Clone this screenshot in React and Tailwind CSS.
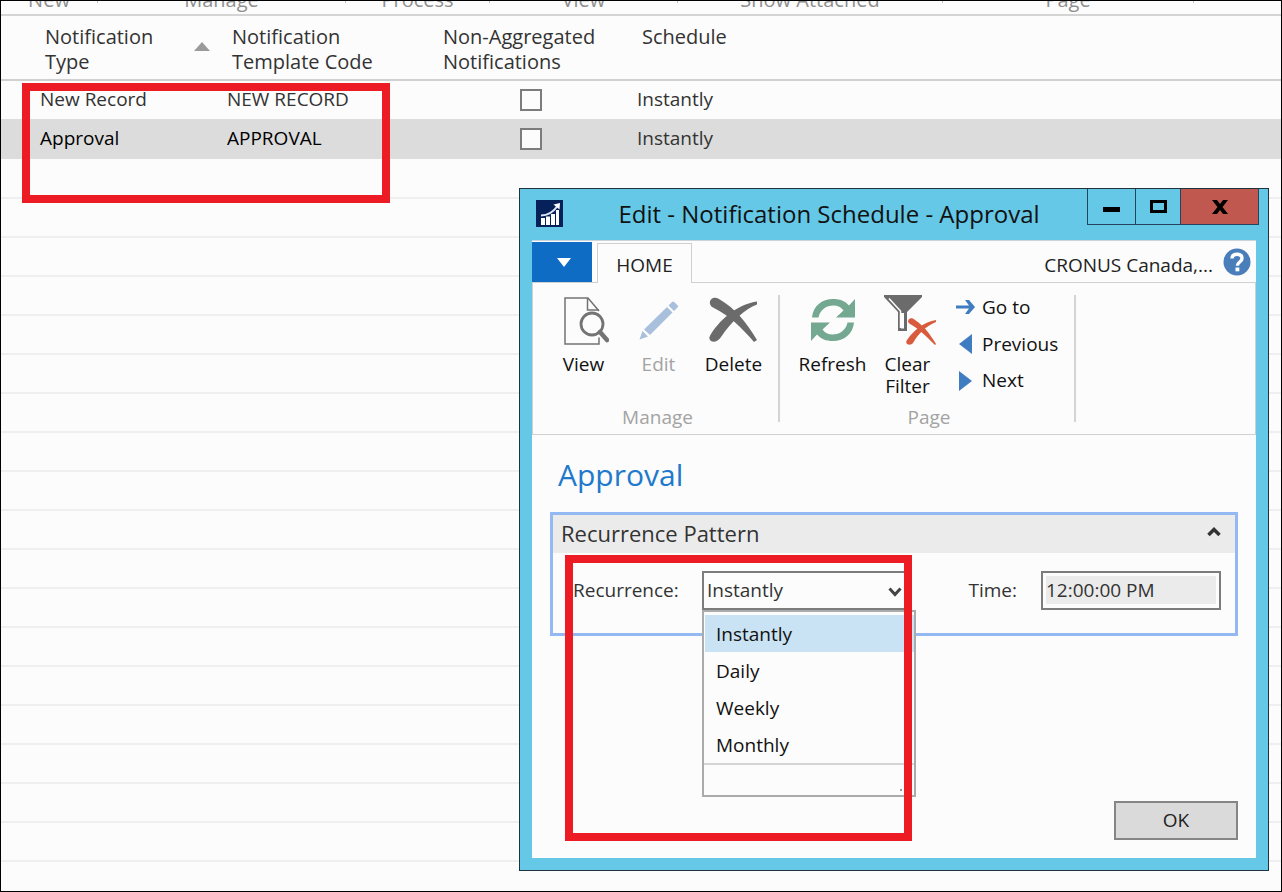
import { useState } from "react";

const ribbonGroups = [
  { label: "New", width: "w-[97px]" },
  { label: "Manage", width: "w-[248px]" },
  { label: "Process", width: "w-36" },
  { label: "View", width: "w-[188px]" },
  { label: "Show Attached", width: "w-[265px]" },
  { label: "Page", width: "w-[251px]" },
];

const records = [
  { type: "New Record", code: "NEW RECORD", schedule: "Instantly", selected: false },
  { type: "Approval", code: "APPROVAL", schedule: "Instantly", selected: true },
];

const emptyRows = Array.from({ length: 19 }, (_, i) => i);

const recurrenceOptions = ["Instantly", "Daily", "Weekly", "Monthly"];

function TopRibbon() {
  return (
    <div className="flex h-[15px] overflow-hidden border-b-2 border-[#d4d4d4]">
      {ribbonGroups.map((g) => (
        <div key={g.label} className={`flex shrink-0 items-end ${g.width}`}>
          <span className="flex-1 pb-1 text-center text-[20px] leading-5 text-[#8f8f8f]">{g.label}</span>
          <span className="h-0.5 w-px self-start bg-[#c8c8c8]" />
        </div>
      ))}
    </div>
  );
}

function NotificationTable() {
  return (
    <table className="w-full table-fixed border-collapse text-left text-[19px] text-[#333]">
      <colgroup>
        <col className="w-[187px]" />
        <col className="w-[211px]" />
        <col className="w-[199px]" />
        <col />
      </colgroup>
      <thead>
        <tr className="h-16 border-b-2 border-[#d0d0d0] align-top text-[20px] leading-[25px]">
          <th className="pt-2 pl-11 font-normal">Notification<br />Type</th>
          <th className="relative pt-2 pl-11 font-normal">
            <svg className="absolute top-[26px] left-1.5" width="16" height="9" viewBox="0 0 16 9" aria-hidden="true">
              <path d="M8 0 16 9H0z" fill="#9a9a9a" />
            </svg>
            Notification<br />Template Code
          </th>
          <th className="pt-2 pl-11 font-normal whitespace-nowrap">Non-Aggregated<br />Notifications</th>
          <th className="pt-2 pl-11 font-normal">Schedule</th>
        </tr>
      </thead>
      <tbody>
        {records.map((r) => (
          <tr key={r.type} className={r.selected ? "h-10 bg-[#dcdcdc]" : "h-[39px]"}>
            <td className={r.selected ? "pb-px pl-[39px] text-black" : "pb-px pl-[39px]"}>{r.type}</td>
            <td className={r.selected ? "pb-px pl-[39px] text-black" : "pb-px pl-[39px]"}>{r.code}</td>
            <td className="pl-[121px]">
              <input
                type="checkbox"
                aria-label={`Non-aggregated notifications for ${r.type}`}
                className="block size-[22px] appearance-none border-2 border-[#7c7c7c] bg-[#fcfcfc] checked:bg-[#4a7ebb]"
              />
            </td>
            <td className="pb-px pl-[39px]">{r.schedule}</td>
          </tr>
        ))}
        {emptyRows.map((i) => (
          <tr key={i} className="h-[39px] border-b-2 border-[#efefef]">
            <td colSpan={4} />
          </tr>
        ))}
      </tbody>
    </table>
  );
}

function AppLogo() {
  return (
    <svg width="27" height="27" viewBox="0 0 27 27" aria-hidden="true">
      <rect width="27" height="27" fill="#06215a" />
      <path d="M5 18h4v7H5zM10 16.500h4V25h-4zM15 14h4v11h-4zM20 10h3v15h-3z" fill="#fff" />
      <path d="M5 15.500c7 0 12-3 16.500-9.500" fill="none" stroke="#dfe6f2" strokeWidth="2" />
      <path d="M17.500 4.500 24 3l-.5 6.500z" fill="#fff" />
    </svg>
  );
}

function ViewIcon() {
  return (
    <svg width="50" height="50" viewBox="0 0 50 50" fill="none" stroke="#737373" aria-hidden="true">
      <path d="M40 42.500V49H6V3h23l11 13" strokeWidth="1.500" />
      <path d="M28.500 3v12H40" strokeWidth="1.500" />
      <circle cx="33" cy="29" r="11" strokeWidth="2.800" />
      <path d="m41 37 7 8" strokeWidth="4.500" strokeLinecap="round" />
    </svg>
  );
}

function EditIcon() {
  return (
    <svg width="50" height="50" viewBox="0 0 50 50" fill="#a9c0dd" aria-hidden="true">
      <path d="M10 34.500 33 12l5.500 5.500L16 40z" />
      <path d="M34.500 10.500 38 7c.7-.7 1.500-.7 2.200 0l3.500 3.500c.6.6.6 1.200 0 1.800L40 16z" />
      <path d="M8.500 36 14 41.500 5.500 44.500z" />
    </svg>
  );
}

function DeleteIcon() {
  return (
    <svg width="50" height="50" viewBox="0 0 50 50" fill="#6b6b6b" aria-hidden="true">
      <path d="M1 9C0 4 5 1 10 4c16 9 28 24 38 41l-3 2C33 33 21 21 5 13c-2-1-3.500-2-4-4z" />
      <path d="M2 39C13 22 30 9 48 6.500V9.500C36 14 22 27 12 42c-3 5-9 6-11 3-1-1.500-1-3 1-6z" />
    </svg>
  );
}

function RefreshIcon() {
  return (
    <svg width="46" height="46" viewBox="0 0 46 46" fill="#74a891" aria-hidden="true">
      <path d="M2 20.500C3 9 12 2 23 2c7 0 12 2 16 6.500L45 2v18.500H26l7.500-7C31 10 28 8.500 23.500 8.500 16 8.500 10 13 8.500 20.500z" />
      <path d="M44 25.500C43 37 34 44 23 44c-7 0-12-2-16-6.500L1 44V25.500h19l-7.500 7C15 36 18 37.500 22.500 37.500 30 37.500 36 33 37.500 25.500z" />
    </svg>
  );
}

function ClearFilterIcon() {
  return (
    <svg width="58" height="52" viewBox="0 0 58 52" aria-hidden="true">
      <path d="M5 1h38v2L28 18v19h-9V18L5 3z" fill="#6b6b6b" />
      <path d="M10 4.500 21.500 17v17" fill="none" stroke="#fff" strokeWidth="1.500" />
      <path d="M23.500 19v15.500" fill="none" stroke="#fff" strokeWidth="3" />
      <path d="M29 28c0-4 4-5 7-2 9 6 15 14 21 24l-1 1C47 42 39 34 31 30z" fill="#d95b3d" />
      <path d="M28 46c7-10 17-18 29-20v2C47 32 39 40 34 49c-2 3-9 2-6-3z" fill="#d95b3d" />
    </svg>
  );
}

function HelpIcon() {
  return (
    <svg width="28" height="28" viewBox="0 0 28 28" aria-hidden="true">
      <circle cx="14" cy="14" r="13.500" fill="#4a7ebb" />
      <path d="M9 10.500C9 7.500 11.300 6.200 14 6.200s5 1.300 5 4.200c0 3.600-4.600 3.600-4.600 7.300" fill="none" stroke="#fff" strokeWidth="3.400" />
      <rect x="12.500" y="19.500" width="3.800" height="3.800" fill="#fff" />
    </svg>
  );
}

function TitleBar() {
  return (
    <header className="flex h-[51px] items-start pr-[9px] pl-4">
      <div className="mt-[11px]"><AppLogo /></div>
      <h1 className="flex-1 pt-[9px] pl-2 text-center text-[24px] leading-8 whitespace-nowrap text-[#111]">
        Edit - Notification Schedule - Approval
      </h1>
      <div className="flex h-9 border-x border-b border-[#24445c]">
        <button aria-label="Minimize" className="flex w-12 items-center justify-center border-r border-[#24445c]">
          <span className="mt-1.5 h-[5px] w-[17px] bg-black" />
        </button>
        <button aria-label="Maximize" className="flex w-11 items-center justify-center">
          <span className="h-[13px] w-[17px] border-[3px] border-black" />
        </button>
        <button aria-label="Close" className="flex w-[78px] items-center justify-center border-l border-[#24445c] bg-[#c1584f]">
          <svg width="16" height="14" viewBox="0 0 16 14" aria-hidden="true">
            <path d="M0 0h5l3 4 3-4h5l-5.500 7L16 14h-5l-3-4-3 4H0l5.500-7z" fill="#000" />
          </svg>
        </button>
      </div>
    </header>
  );
}

function TabRow() {
  return (
    <div className="flex h-[43px] items-stretch border-t border-[#c9d5da] bg-[#fcfcfc]">
      <div className="w-[65px] border-b border-[#d0d0d0] pt-px">
        <button aria-label="Application menu" className="flex h-10 w-[60px] items-center justify-center bg-[#0f6cc5] pl-1">
          <svg width="14" height="9" viewBox="0 0 14 9" aria-hidden="true">
            <path d="M0 0h14L7 9z" fill="#fff" />
          </svg>
        </button>
      </div>
      <button className="mt-0.5 w-[95px] border-x border-t border-[#d0d0d0] pt-1 text-[19px] text-[#222]">HOME</button>
      <div className="flex flex-1 items-center justify-end gap-2.5 border-b border-[#d0d0d0] pr-[5px]">
        <span className="pt-2 text-[19px] text-[#222]">CRONUS Canada,...</span>
        <button aria-label="Help"><HelpIcon /></button>
      </div>
    </div>
  );
}

function RibbonButton({ icon, label, width, disabled }) {
  return (
    <button disabled={disabled} className={`flex flex-col items-center text-[19px] leading-[22px] ${width} ${disabled ? "text-[#a3a3a3]" : "text-[#111]"}`}>
      <span className="mb-2 flex h-[50px] items-center">{icon}</span>
      {label}
    </button>
  );
}

function LinkButton({ icon, label }) {
  return (
    <button className="flex h-[37px] items-center gap-1.5 text-[19px] text-[#111]">
      <svg width="20" height="20" viewBox="0 0 20 20" aria-hidden="true">{icon}</svg>
      {label}
    </button>
  );
}

function Ribbon() {
  return (
    <div className="flex h-[152px] border-x border-b border-[#d0d0d0] pt-3">
      <section className="flex h-[127px] w-[247px] flex-col justify-between border-r-2 border-[#d4d4d4]">
        <div className="flex pl-[13px]">
          <RibbonButton icon={<ViewIcon />} label="View" width="w-[75px]" />
          <RibbonButton icon={<EditIcon />} label="Edit" width="w-[75px]" disabled />
          <RibbonButton icon={<DeleteIcon />} label="Delete" width="w-[75px]" />
        </div>
        <p className="pl-1 text-center text-[19px] leading-[10px] text-[#a3a3a3]">Manage</p>
      </section>
      <section className="flex h-[127px] w-[296px] flex-col justify-between border-r-2 border-[#d4d4d4]">
        <div className="flex h-[104px] pl-3.5">
          <RibbonButton icon={<RefreshIcon />} label="Refresh" width="w-[77px]" />
          <RibbonButton icon={<ClearFilterIcon />} label={<span>Clear<br />Filter</span>} width="w-[73px]" />
          <div className="-mt-1.5 ml-3 flex flex-col">
            <LinkButton label="Go to" icon={<path d="M0 8.500h13L9 3h4l6 7-6 7H9l4-5.500H0z" fill="#3f7cc0" />} />
            <LinkButton label="Previous" icon={<path d="M16 0v20L3 10z" fill="#3f7cc0" />} />
            <LinkButton label="Next" icon={<path d="M3 0v20l13-10z" fill="#3f7cc0" />} />
          </div>
        </div>
        <p className="pl-1 text-center text-[19px] leading-[10px] text-[#a3a3a3]">Page</p>
      </section>
    </div>
  );
}

function RecurrenceField() {
  const [value, setValue] = useState("Instantly");
  return (
    <div className="relative w-[206px]">
      <select
        id="recurrence"
        value={value}
        onChange={(e) => setValue(e.target.value)}
        className="block h-[39px] w-full appearance-none border-2 border-[#7c7c7c] bg-[#fcfcfc] pl-[3px] text-[19px] text-[#333]"
      >
        {recurrenceOptions.map((o) => <option key={o}>{o}</option>)}
      </select>
      <svg className="pointer-events-none absolute top-4 right-1.5" width="14" height="10" viewBox="0 0 14 10" aria-hidden="true">
        <path d="m1.500 1.500 5.500 6 5.500-6" fill="none" stroke="#444" strokeWidth="3" />
      </svg>
      <div className="absolute top-[39px] left-0 z-10 w-[214px] border-2 border-[#ababab] bg-[#fcfcfc]">
        <div role="listbox" aria-label="Recurrence options" className="border-b-2 border-[#d4d4d4] pt-[3px] pl-px">
          {recurrenceOptions.map((o) => (
            <button
              key={o}
              role="option"
              aria-selected={o === value}
              onClick={() => setValue(o)}
              className={`block h-[37px] w-full pt-0.5 pl-[11px] text-left text-[19px] text-[#111] ${o === value ? "bg-[#c9e2f4]" : ""}`}
            >
              {o}
            </button>
          ))}
        </div>
        <div className="flex h-[30px] items-end justify-end gap-0.5 pr-1 pb-1">
          <span className="size-0.5 bg-[#9a9a9a]" />
          <span className="size-0.5 bg-[#9a9a9a]" />
          <span className="size-0.5 bg-[#9a9a9a]" />
        </div>
      </div>
    </div>
  );
}

function ScheduleDialog() {
  return (
    <div
      role="dialog"
      aria-label="Edit - Notification Schedule - Approval"
      className="absolute top-[187px] right-3 bottom-5 left-[518px] flex flex-col border border-[#20323b] bg-[#65c8e7]"
    >
      <TitleBar />
      <div className="mx-3 mb-3 flex flex-1 flex-col bg-[#fcfcfc]">
        <TabRow />
        <Ribbon />
        <div className="flex flex-1 flex-col px-[18px] pb-[18px]">
          <h2 className="pt-5 pl-2 text-[30px] leading-10 text-[#2179cc]">Approval</h2>
          <section className="mt-[17px] h-[124px] border-[3px] border-[#94b8f2]">
            <div className="flex h-[38px] items-center justify-between bg-[#ebebeb] pr-3.5 pl-2">
              <h3 className="pb-0.5 text-[22px] text-[#333]">Recurrence Pattern</h3>
              <button aria-label="Collapse Recurrence Pattern" className="pb-1">
                <svg width="14" height="10" viewBox="0 0 14 10" aria-hidden="true">
                  <path d="m1.500 8 5.500-5.500L12.500 8" fill="none" stroke="#333" strokeWidth="3.500" />
                </svg>
              </button>
            </div>
            <div className="flex items-center pt-[18px] pr-3.5 pl-5 text-[19px] text-[#333]">
              <label htmlFor="recurrence" className="w-[129px]">Recurrence:</label>
              <RecurrenceField />
              <label htmlFor="time" className="mr-6 ml-auto">Time:</label>
              <div className="h-[39px] w-[180px] border-2 border-[#7c7c7c] p-[3px]">
                <input id="time" readOnly defaultValue="12:00:00 PM" className="block h-[28px] w-full bg-[#ebebeb] text-[19px] outline-none" />
              </div>
            </div>
          </section>
          <button className="mt-auto h-[39px] w-[124px] self-end border-2 border-[#858585] bg-[#dadada] text-[19px] text-[#222]">OK</button>
        </div>
      </div>
      <div className="pointer-events-none absolute top-[366px] left-[45px] z-20 h-[286px] w-[347px] border-8 border-[#ed1c24]" />
    </div>
  );
}

export default function App() {
  return (
    <main className="relative h-screen min-h-[600px] overflow-hidden border border-black bg-[#fcfcfc] font-['Open_Sans','Noto_Sans',sans-serif]">
      <TopRibbon />
      <NotificationTable />
      <div className="pointer-events-none absolute top-[82px] left-[21px] h-[120px] w-[368px] border-8 border-[#ed1c24]" />
      <ScheduleDialog />
    </main>
  );
}
